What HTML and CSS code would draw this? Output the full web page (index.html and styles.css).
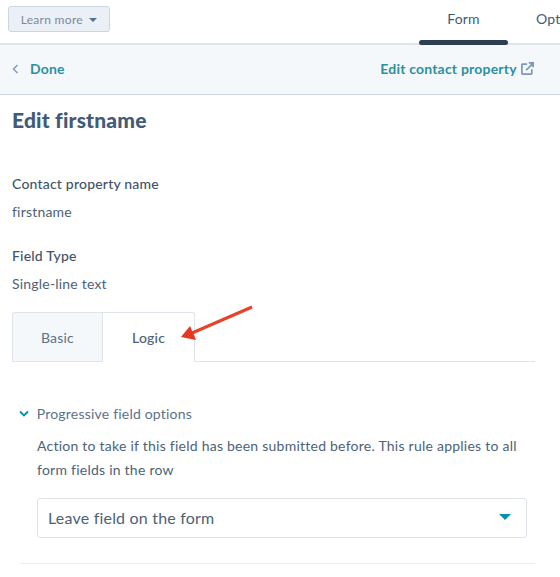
FILE: index.html
```html
<!DOCTYPE html>
<html>
  <head>
    <title>Edit firstname</title>
    <meta charset="utf-8">
    <link rel="stylesheet" href="styles.css">
  </head>

  <body>
    <div class="topbar">
      <button class="learn">Learn more <span class="caret-small"></span></button>
      <div class="topnav">
        <div class="topnav-item active">Form</div>
        <div class="topnav-item opt">Options</div>
      </div>
    </div>

    <div class="donebar">
      <a class="done"><svg class="back" width="7" height="10" viewBox="0 0 7 10"><path d="M5.500 1 L1.500 5 L5.500 9" fill="none" stroke="#7c98b6" stroke-width="1.400"/></svg>Done</a>
      <a class="edit-link">Edit contact property
        <svg width="13" height="13" viewBox="0 0 15 15"><path d="M7 2.500 H2 a1 1 0 0 0 -1 1 V13 a1 1 0 0 0 1 1 H11.500 a1 1 0 0 0 1 -1 V8.500 M6 9.500 L13.500 1.500 M9 1 H14 V6" fill="none" stroke="#7c98b6" stroke-width="2"/></svg>
      </a>
    </div>

    <div class="panel">
      <h1>Edit firstname</h1>

      <div class="field first">
        <div class="field-label">Contact property name</div>
        <div class="field-value">firstname</div>
      </div>
      <div class="field">
        <div class="field-label">Field Type</div>
        <div class="field-value">Single-line text</div>
      </div>

      <div class="tabs">
        <div class="tab">Basic</div>
        <div class="tab selected">Logic</div>
      </div>

      <div class="options">
        <div class="options-head">
          <svg width="10" height="7" viewBox="0 0 10 7"><path d="M1 1.500 L5 5.500 L9 1.500" fill="none" stroke="#0091ae" stroke-width="1.800"/></svg>
          Progressive field options
        </div>
        <p class="options-text">Action to take if this field has been submitted before. This rule applies to all form fields in the row</p>
        <div class="select">
          <span class="select-value">Leave field on the form</span>
          <span class="caret"></span>
        </div>
      </div>
      <div class="rule"></div>
    </div>

    <svg class="arrow" width="80" height="50" viewBox="0 0 80 50">
      <path d="M74 3 L14 29" fill="none" stroke="#e8432a" stroke-width="3"/>
      <path d="M3 33 L12 22 L18 36 Z" fill="#e8361f"/>
    </svg>
  </body>
</html>
```

FILE: styles.css
```css
body{
  margin: 0;
  background-color: #fff;
  font-family: "Lato", "Liberation Sans", sans-serif;
  font-size: 14px;
  letter-spacing: 0.2px;
  color: #33475b;
  overflow: hidden;
}
.topbar{
  display: flex;
  justify-content: space-between;
  height: 43px;
  padding-left: 8px;
  border-bottom: 2px solid #dfe3eb;
}
.learn{
  align-self: flex-start;
  margin-top: 6px;
  width: 102px;
  height: 26px;
  padding: 0;
  font-family: inherit;
  font-size: 12px;
  letter-spacing: 0.3px;
  color: #7b8a9b;
  background-color: #eaf0f6;
  border: 1px solid #cbd6e2;
  border-radius: 3px;
}
.caret-small{
  display: inline-block;
  margin-left: 3px;
  vertical-align: 2px;
  border-top: 4px solid #516f90;
  border-left: 4px solid transparent;
  border-right: 4px solid transparent;
}
.topnav{
  display: flex;
  width: 141px;
  height: 45px;
  overflow: hidden;
}
.topnav-item{
  flex: none;
  padding-top: 10px;
  font-size: 14px;
  letter-spacing: 0.2px;
  color: #425b76;
}
.topnav-item.active{
  position: relative;
  width: 89px;
  text-align: center;
}
.topnav-item.active::after{
  content: "";
  position: absolute;
  left: 0;
  right: 0;
  bottom: 0;
  height: 5px;
  background-color: #2d3e50;
  border-radius: 3px;
}
.topnav-item.opt{
  margin-left: 28px;
}
.donebar{
  display: flex;
  justify-content: space-between;
  align-items: center;
  box-sizing: border-box;
  height: 50px;
  padding: 0 26px 2px 12px;
  background-color: #f5f8fa;
  border-bottom: 1px solid #cbd6e2;
  font-weight: 700;
  color: #2b909f;
}
.back{
  margin-right: 11px;
}
.edit-link svg{
  vertical-align: -1px;
  margin-left: 1px;
}
.panel{
  padding: 0 25px 0 12px;
}
h1{
  margin: 12px 0 0;
  font-size: 21px;
  line-height: 26px;
  letter-spacing: 0.2px;
  font-weight: 900;
  color: #425b76;
}
.field{
  margin-top: 24px;
}
.field.first{
  margin-top: 41px;
}
.field-label{
  font-weight: 500;
  line-height: 20px;
  color: #3f5468;
}
.field-value{
  margin-top: 8px;
  line-height: 20px;
  color: #4d6277;
}
.tabs{
  display: flex;
  height: 49px;
  margin-top: 18px;
  border-bottom: 1px solid #dfe3eb;
}
.tab{
  box-sizing: border-box;
  width: 91px;
  height: 49px;
  line-height: 49px;
  text-align: center;
  color: #5b7288;
  background-color: #f5f8fa;
  border: 1px solid #dfe3eb;
  border-bottom: 0;
  border-radius: 3px 0 0 0;
}
.tab.selected{
  width: 93px;
  height: 50px;
  margin-left: -1px;
  font-weight: 500;
  color: #4d6277;
  background-color: #fff;
  border-radius: 0 3px 0 0;
}
.options{
  padding: 42px 8px 0 7px;
}
.options-head{
  line-height: 20px;
  color: #5b7288;
}
.options-head svg{
  margin-right: 4px;
  vertical-align: 2px;
}
.options-text{
  margin: 10px 0 0 18px;
  line-height: 24px;
  letter-spacing: 0.24px;
  color: #4d6277;
}
.select{
  display: flex;
  justify-content: space-between;
  align-items: center;
  box-sizing: border-box;
  height: 40px;
  margin: 16px 0 0 18px;
  padding: 0 15px 2px 10px;
  font-size: 16px;
  color: #4d6277;
  border: 1px solid #dfe3eb;
  border-radius: 3px;
}
.caret{
  border-top: 6px solid #0091ae;
  border-left: 6px solid transparent;
  border-right: 6px solid transparent;
}
.rule{
  height: 1px;
  margin: 25px 0 0 8px;
  background-color: #eaf0f6;
}
.arrow{
  position: absolute;
  left: 178px;
  top: 304px;
}
```
